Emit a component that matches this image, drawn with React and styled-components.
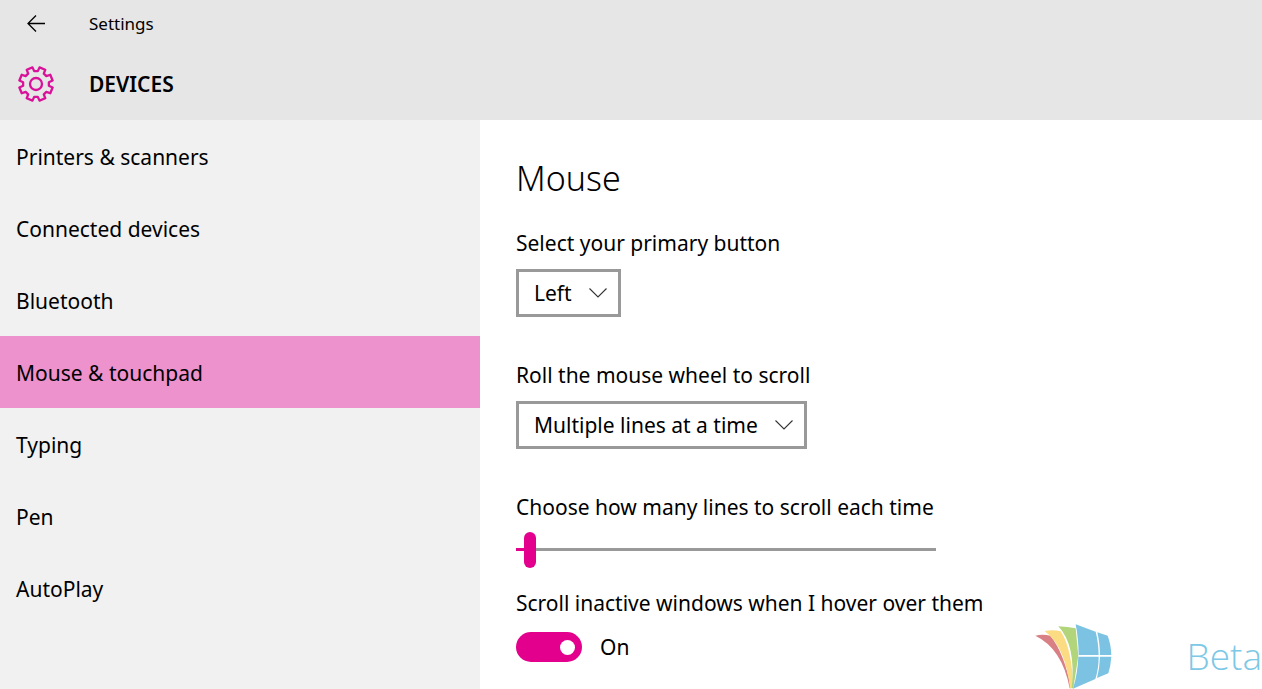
import React, { useId, useState } from "react";
import styled, { createGlobalStyle } from "styled-components";

const accent = "#e3008c";
const family = '"Noto Sans", "Open Sans", sans-serif';

const GlobalStyle = createGlobalStyle`
  *, *::before, *::after { box-sizing: border-box; }
  body {
    margin: 0;
    background: #fff;
    color: #000;
    font-family: ${family};
    font-size: 21px;
    line-height: 32px;
  }
`;

const Page = styled.div`
  min-height: 100vh;
  display: flex;
  flex-direction: column;
`;

const Header = styled.header`
  background: #e6e6e6;
`;

const HeaderRow = styled.div`
  display: grid;
  grid-template-columns: 72px 1fr;
  column-gap: 17px;
  align-items: center;
  height: ${(p) => (p.$tall ? 72 : 48)}px;
`;

const BackButton = styled.button`
  display: flex;
  align-items: center;
  justify-content: center;
  height: 48px;
  padding: 0;
  border: 0;
  background: none;
  color: #000;
`;

const AppTitle = styled.span`
  font-size: 17px;
  line-height: 24px;
`;

const GearSlot = styled.span`
  display: flex;
  justify-content: center;
`;

const SectionTitle = styled.h1`
  margin: 0;
  font-size: 21px;
  line-height: 32px;
  font-weight: 600;
`;

const Body = styled.div`
  flex: 1;
  display: flex;
`;

const Sidebar = styled.nav`
  flex: 0 0 480px;
  background: #f1f1f1;
`;

const NavLink = styled.a`
  display: flex;
  align-items: center;
  height: 72px;
  padding: 2px 16px 0;
  color: #000;
  text-decoration: none;
  background: ${(p) => (p.$active ? "#ed92cc" : "transparent")};
`;

const Content = styled.main`
  position: relative;
  flex: 1;
  min-width: 0;
  overflow: hidden;
  padding: 32px 36px 24px;
`;

const Heading = styled.h2`
  margin: 0 0 23px;
  font-size: 34px;
  line-height: 52px;
  font-weight: 300;
`;

const Field = styled.div`
  display: flex;
  flex-direction: column;
  align-items: flex-start;
  gap: 10px;
  margin-bottom: ${(p) => p.$space}px;
`;

const SelectBox = styled.div`
  position: relative;
  display: flex;
`;

const Select = styled.select`
  appearance: none;
  field-sizing: content;
  height: 48px;
  padding: 0 46px 0 15px;
  border: 3px solid #999;
  border-radius: 0;
  background: #fff;
  color: #000;
  font-family: inherit;
  font-size: 21px;
`;

const Chevron = styled.svg`
  position: absolute;
  right: 14px;
  top: 18px;
  pointer-events: none;
`;

const Slider = styled.input`
  appearance: none;
  display: block;
  width: 420px;
  max-width: 100%;
  height: 32px;
  margin: 0;
  background: transparent;

  &::-webkit-slider-runnable-track {
    height: 3px;
    background: linear-gradient(${accent}, ${accent}) left / var(--fill) 100% no-repeat #999;
  }
  &::-webkit-slider-thumb {
    appearance: none;
    width: 12px;
    height: 36px;
    margin-top: -16px;
    border-radius: 6px;
    background: ${accent};
  }
`;

const ToggleRow = styled.div`
  display: flex;
  align-items: center;
  gap: 18px;
  height: 36px;
`;

const Toggle = styled.input`
  appearance: none;
  display: flex;
  align-items: center;
  justify-content: ${(p) => (p.checked ? "flex-end" : "flex-start")};
  width: 66px;
  height: 30px;
  margin: 0;
  padding: 0 7px;
  border-radius: 15px;
  background: ${(p) => (p.checked ? accent : "#999")};

  &::before {
    content: "";
    width: 15px;
    height: 15px;
    border-radius: 50%;
    background: #fff;
  }
`;

const Watermark = styled.div`
  position: absolute;
  right: 0;
  bottom: 0;
  display: flex;
  align-items: flex-end;
  gap: 74px;
  color: #7cc8e6;
  font-family: "Open Sans", "Noto Sans", sans-serif;
  font-size: 37px;
  line-height: 66px;
  font-weight: 300;
  pointer-events: none;
`;

const point = (r, deg) => {
  const a = (deg * Math.PI) / 180;
  return `${(18 + r * Math.sin(a)).toFixed(2)} ${(18 - r * Math.cos(a)).toFixed(2)}`;
};

const gearPath =
  "M" +
  Array.from({ length: 8 }, (_, i) => i * 45)
    .map((a) => [point(13, a - 8), point(13, a + 8), point(17, a + 12), point(17, a + 33)].join("L"))
    .join("L") +
  "Z";

const Gear = () => (
  <svg width="36" height="36" viewBox="0 0 36 36" fill="none" stroke="#d9109a" strokeWidth="2.3" aria-hidden="true">
    <path d={gearPath} strokeLinejoin="round" />
    <circle cx="18" cy="18" r="6" />
  </svg>
);

const BackArrow = () => (
  <svg width="18" height="18" viewBox="0 0 18 18" fill="none" stroke="currentColor" strokeWidth="1.3" aria-hidden="true">
    <path d="M18 8.5H1M9 .5l-8 8 8 8" />
  </svg>
);

const Logo = () => (
  <svg width="78" height="65" viewBox="76 71 234 195" aria-hidden="true">
    <path fill="#d98085" d="M77 106Q98 101 122 106Q164 158 184 264H180Q158 145 77 106Z" />
    <path fill="#fbdc82" d="M105 92Q130 87 153 93Q188 145 190 264H181Q168 140 105 92Z" />
    <path fill="#b2d57c" d="M146 78Q175 79 198 84L206 166L191 264H186Q200 135 146 78Z" />
    <path fill="#7cc3e3" d="M198 72L258 94Q266 125 267 164H207Q206 112 198 72Z" />
    <path fill="#7cc3e3" d="M263 96L294 106Q304 132 305 164H271Q270 125 263 96Z" />
    <path fill="#7cc3e3" d="M206 169H267Q267 205 257 236L190 265Q204 220 206 169Z" />
    <path fill="#7cc3e3" d="M271 169H305Q303 198 296 219L262 233Q270 202 271 169Z" />
  </svg>
);

const pages = [
  "Printers & scanners",
  "Connected devices",
  "Bluetooth",
  "Mouse & touchpad",
  "Typing",
  "Pen",
  "AutoPlay",
];

function SelectField({ label, options }) {
  const id = useId();
  return (
    <Field $space={42}>
      <label htmlFor={id}>{label}</label>
      <SelectBox>
        <Select id={id} defaultValue={options[0]}>
          {options.map((o) => (
            <option key={o}>{o}</option>
          ))}
        </Select>
        <Chevron width="18" height="12" viewBox="0 0 18 12" fill="none" stroke="#333" strokeWidth="1.1" aria-hidden="true">
          <path d="M.5 1.5L9 10l8.500-8.500" />
        </Chevron>
      </SelectBox>
    </Field>
  );
}

export default function App() {
  const [lines, setLines] = useState(3);
  const [inactive, setInactive] = useState(true);
  return (
    <Page>
      <GlobalStyle />
      <Header>
        <HeaderRow>
          <BackButton type="button" aria-label="Back">
            <BackArrow />
          </BackButton>
          <AppTitle>Settings</AppTitle>
        </HeaderRow>
        <HeaderRow $tall>
          <GearSlot>
            <Gear />
          </GearSlot>
          <SectionTitle>DEVICES</SectionTitle>
        </HeaderRow>
      </Header>
      <Body>
        <Sidebar>
          {pages.map((name) => (
            <NavLink key={name} href="#" $active={name === "Mouse & touchpad"}>
              {name}
            </NavLink>
          ))}
        </Sidebar>
        <Content>
          <Heading>Mouse</Heading>
          <SelectField label="Select your primary button" options={["Left", "Right"]} />
          <SelectField
            label="Roll the mouse wheel to scroll"
            options={["Multiple lines at a time", "One screen at a time"]}
          />
          <Field $space={22}>
            <label htmlFor="lines">Choose how many lines to scroll each time</label>
            <Slider
              id="lines"
              type="range"
              min="1"
              max="100"
              value={lines}
              onChange={(e) => setLines(Number(e.target.value))}
              style={{ "--fill": `${((lines - 1) / 99) * 100}%` }}
            />
          </Field>
          <Field $space={0}>
            <label htmlFor="inactive">Scroll inactive windows when I hover over them</label>
            <ToggleRow>
              <Toggle
                id="inactive"
                type="checkbox"
                role="switch"
                checked={inactive}
                onChange={(e) => setInactive(e.target.checked)}
              />
              <span>{inactive ? "On" : "Off"}</span>
            </ToggleRow>
          </Field>
          <Watermark>
            <Logo />
            <span>Beta</span>
          </Watermark>
        </Content>
      </Body>
    </Page>
  );
}
